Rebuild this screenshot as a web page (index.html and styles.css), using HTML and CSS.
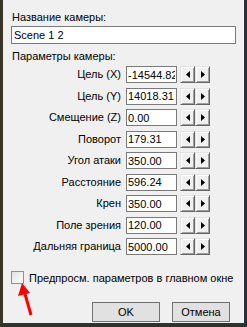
FILE: index.html
```html
<!DOCTYPE html>
<html lang="ru">
<head>
    <meta charset="UTF-8">
    <meta name="viewport" content="width=device-width, initial-scale=1.0">
    <title>Параметры камеры</title>
    <link rel="stylesheet" href="styles.css">
</head>
<body>
    <div class="window">
        <div class="field-label">Название камеры:</div>
        <input type="text" class="name-input" value="Scene 1 2">

        <div class="section-label">Параметры камеры:</div>
        <div class="params">
            <div class="param-row">
                <span class="param-label">Цель (X)</span>
                <input type="text" class="param-input" value="-14544.82">
                <div class="spin">
                    <button class="spin-btn"><svg width="4" height="7" viewBox="0 0 4 7"><polygon points="4,0 4,7 0,3.5"/></svg></button>
                    <button class="spin-btn"><svg width="4" height="7" viewBox="0 0 4 7"><polygon points="0,0 0,7 4,3.5"/></svg></button>
                </div>
            </div>
            <div class="param-row">
                <span class="param-label">Цель (Y)</span>
                <input type="text" class="param-input" value="14018.31">
                <div class="spin">
                    <button class="spin-btn"><svg width="4" height="7" viewBox="0 0 4 7"><polygon points="4,0 4,7 0,3.5"/></svg></button>
                    <button class="spin-btn"><svg width="4" height="7" viewBox="0 0 4 7"><polygon points="0,0 0,7 4,3.5"/></svg></button>
                </div>
            </div>
            <div class="param-row">
                <span class="param-label">Смещение (Z)</span>
                <input type="text" class="param-input" value="0.00">
                <div class="spin">
                    <button class="spin-btn"><svg width="4" height="7" viewBox="0 0 4 7"><polygon points="4,0 4,7 0,3.5"/></svg></button>
                    <button class="spin-btn"><svg width="4" height="7" viewBox="0 0 4 7"><polygon points="0,0 0,7 4,3.5"/></svg></button>
                </div>
            </div>
            <div class="param-row">
                <span class="param-label">Поворот</span>
                <input type="text" class="param-input" value="179.31">
                <div class="spin">
                    <button class="spin-btn"><svg width="4" height="7" viewBox="0 0 4 7"><polygon points="4,0 4,7 0,3.5"/></svg></button>
                    <button class="spin-btn"><svg width="4" height="7" viewBox="0 0 4 7"><polygon points="0,0 0,7 4,3.5"/></svg></button>
                </div>
            </div>
            <div class="param-row">
                <span class="param-label">Угол атаки</span>
                <input type="text" class="param-input" value="350.00">
                <div class="spin">
                    <button class="spin-btn"><svg width="4" height="7" viewBox="0 0 4 7"><polygon points="4,0 4,7 0,3.5"/></svg></button>
                    <button class="spin-btn"><svg width="4" height="7" viewBox="0 0 4 7"><polygon points="0,0 0,7 4,3.5"/></svg></button>
                </div>
            </div>
            <div class="param-row">
                <span class="param-label">Расстояние</span>
                <input type="text" class="param-input" value="596.24">
                <div class="spin">
                    <button class="spin-btn"><svg width="4" height="7" viewBox="0 0 4 7"><polygon points="4,0 4,7 0,3.5"/></svg></button>
                    <button class="spin-btn"><svg width="4" height="7" viewBox="0 0 4 7"><polygon points="0,0 0,7 4,3.5"/></svg></button>
                </div>
            </div>
            <div class="param-row">
                <span class="param-label">Крен</span>
                <input type="text" class="param-input" value="350.00">
                <div class="spin">
                    <button class="spin-btn"><svg width="4" height="7" viewBox="0 0 4 7"><polygon points="4,0 4,7 0,3.5"/></svg></button>
                    <button class="spin-btn"><svg width="4" height="7" viewBox="0 0 4 7"><polygon points="0,0 0,7 4,3.5"/></svg></button>
                </div>
            </div>
            <div class="param-row">
                <span class="param-label">Поле зрения</span>
                <input type="text" class="param-input" value="120.00">
                <div class="spin">
                    <button class="spin-btn"><svg width="4" height="7" viewBox="0 0 4 7"><polygon points="4,0 4,7 0,3.5"/></svg></button>
                    <button class="spin-btn"><svg width="4" height="7" viewBox="0 0 4 7"><polygon points="0,0 0,7 4,3.5"/></svg></button>
                </div>
            </div>
            <div class="param-row">
                <span class="param-label">Дальняя граница</span>
                <input type="text" class="param-input" value="5000.00">
                <div class="spin">
                    <button class="spin-btn"><svg width="4" height="7" viewBox="0 0 4 7"><polygon points="4,0 4,7 0,3.5"/></svg></button>
                    <button class="spin-btn"><svg width="4" height="7" viewBox="0 0 4 7"><polygon points="0,0 0,7 4,3.5"/></svg></button>
                </div>
            </div>
        </div>

        <label class="preview">
            <span class="checkbox"></span>
            <span>Предпросм. параметров в главном окне</span>
        </label>

        <div class="actions">
            <button class="dlg-btn ok-btn">OK</button>
            <button class="dlg-btn cancel-btn">Отмена</button>
        </div>

        <!-- red pointer drawn over the dialog -->
        <svg class="arrow" width="20" height="40" viewBox="0 0 20 40">
            <line x1="13" y1="32" x2="7" y2="11" stroke="#ff0000" stroke-width="3"/>
            <polygon points="4,0 0,13 12,10" fill="#ff0000"/>
        </svg>
    </div>
</body>
</html>
```

FILE: styles.css
```css
html, body {
    margin: 0;
    padding: 0;
}
body {
    font-family: "Liberation Sans", Arial, sans-serif;
    font-size: 11px;
    color: #000;
    background-color: #2f3426;
}
.window {
    position: relative;
    box-sizing: border-box;
    width: 247px;
    height: 327px;
    padding: 11px 8px 0 8px;
    background-color: #f0f0f0;
    border-left: 3px solid #3a3529;
    border-right: 3px solid #29303d;
    border-bottom: 4px solid #2d3526;
    box-shadow: inset -1px 0 #fafafa;
}
.field-label,
.section-label {
    line-height: 13px;
    padding-left: 1px;
}
.name-input {
    display: block;
    box-sizing: border-box;
    width: 225px;
    height: 18px;
    margin: 2px 0 0 0;
    padding: 0 2px;
    border: 1px solid #7a7a7a;
    background-color: #fff;
    font-family: inherit;
    font-size: 11px;
    color: #000;
    outline: none;
}
.section-label {
    margin-top: 6px;
}
.params {
    display: flex;
    flex-direction: column;
    gap: 4.5px;
    margin-top: 3px;
}
.param-row {
    display: flex;
    align-items: center;
    height: 17px;
}
.param-label {
    width: 110px;
    text-align: right;
    line-height: 17px;
    white-space: nowrap;
}
.param-input {
    box-sizing: border-box;
    width: 51px;
    height: 17px;
    margin: 0 0 0 5px;
    padding: 0 1px;
    border: 1px solid #7a7a7a;
    background-color: #fff;
    font-family: inherit;
    font-size: 11px;
    color: #000;
    outline: none;
}
.spin {
    display: flex;
    margin-left: 3px;
}
.spin-btn {
    display: flex;
    align-items: center;
    justify-content: center;
    box-sizing: border-box;
    width: 15px;
    height: 17px;
    padding: 0;
    border: 1px solid;
    border-color: #e3e3e3 #646464 #646464 #e3e3e3;
    box-shadow: inset 1px 1px #fff, inset -1px -1px #a0a0a0;
    background-color: #f0f0f0;
}
.spin-btn svg {
    fill: #000;
}
.preview {
    display: flex;
    align-items: center;
    gap: 5px;
    height: 13px;
    margin-top: 16px;
    white-space: nowrap;
}
.checkbox {
    box-sizing: border-box;
    width: 13px;
    height: 13px;
    border: 1px solid #8f8f8f;
    background: linear-gradient(135deg, #e2e2e2, #fff);
}
.actions {
    display: flex;
    gap: 12px;
    margin-top: 18px;
    padding-left: 81px;
}
.dlg-btn {
    box-sizing: border-box;
    height: 20px;
    padding: 0;
    border: 1px solid #707070;
    background-color: #e1e1e1;
    font-family: inherit;
    font-size: 11px;
    color: #000;
}
.ok-btn {
    width: 68px;
}
.cancel-btn {
    width: 58px;
}
.arrow {
    position: absolute;
    left: 15px;
    top: 283px;
}
```
